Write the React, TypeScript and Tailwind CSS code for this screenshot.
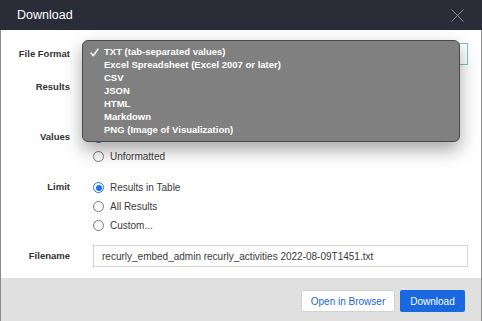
import React from "react";

const formats = [
  "TXT (tab-separated values)",
  "Excel Spreadsheet (Excel 2007 or later)",
  "CSV",
  "JSON",
  "HTML",
  "Markdown",
  "PNG (Image of Visualization)",
];

function Radio({ checked, label }: { checked?: boolean; label?: string }) {
  return (
    <div className="flex h-[19px] items-center">
      {checked ? (
        <span className="flex h-[11px] w-[11px] items-center justify-center rounded-full border border-[#1a73e8] bg-white">
          <span className="h-[6px] w-[6px] rounded-full bg-[#1a73e8]" />
        </span>
      ) : (
        <span className="h-[11px] w-[11px] rounded-full border border-[#7a7a7a] bg-white" />
      )}
      {label && <span className="ml-[6px] text-[10px] text-[#3a3a3a]">{label}</span>}
    </div>
  );
}

function Field({ label, children, className }: { label: string; children: React.ReactNode; className?: string }) {
  return (
    <div className={"flex " + (className ?? "")}>
      <div className="flex h-[19px] w-[69px] shrink-0 items-center justify-end text-[9.5px] font-bold text-[#333]">
        {label}
      </div>
      <div className="ml-[23px] flex-1">{children}</div>
    </div>
  );
}

export default function App() {
  return (
    <div className="h-[321px] w-[482px] overflow-hidden bg-[#3a3a3a] font-['Liberation_Sans',Arial,sans-serif]">
      <div className="flex h-[30px] items-center justify-between bg-[#2a2c38] pl-[17px] pr-[18px]">
        <span className="text-[12.5px] text-white">Download</span>
        <svg width="13" height="13" viewBox="0 0 13 13" className="text-[#8c8e96]">
          <path d="M0.5 0.5L12.5 12.5M12.5 0.5L0.5 12.5" stroke="currentColor" strokeWidth="1" />
        </svg>
      </div>

      <div className="relative border-x border-[#8c8c8c] bg-white pb-[11px] pr-[13px] pt-[13px]">
        <div className="flex">
          <div className="flex h-[22px] w-[69px] shrink-0 items-center justify-end text-[9.5px] font-bold text-[#333]">
            File Format
          </div>
          <div className="ml-[23px] h-[22px] flex-1 border border-[#78c4cf] bg-white" />
        </div>

        {/* options under the open menu are hidden, only their radios sit there */}
        <Field label="Results" className="mt-[13px]">
          <Radio checked />
          <Radio />
        </Field>

        <Field label="Values" className="mt-3">
          <Radio checked />
          <Radio label="Unformatted" />
        </Field>

        <Field label="Limit" className="mt-3">
          <Radio checked label="Results in Table" />
          <Radio label="All Results" />
          <Radio label="Custom..." />
        </Field>

        <div className="mt-[10px] flex">
          <div className="flex h-[22px] w-[69px] shrink-0 items-center justify-end text-[9.5px] font-bold text-[#333]">
            Filename
          </div>
          <div className="ml-[23px] flex h-[22px] flex-1 items-center border border-[#d4d4d4] bg-white px-[8px] text-[10px] text-[#3a3a3a]">
            recurly_embed_admin recurly_activities 2022-08-09T1451.txt
          </div>
        </div>

        <div className="absolute left-[81px] top-[10px] w-[378px] rounded-[6px] border border-[#4a4a4a] bg-[#808080] pb-[4px] pt-[5px] shadow-[0_8px_18px_rgba(0,0,0,0.35)]">
          {formats.map((f, i) => (
            <div key={f} className="flex h-[13px] items-center text-[9.5px] font-bold text-white">
              <span className="flex w-[21px] justify-end pr-[5px]">
                {i === 0 && (
                  <svg width="9" height="9" viewBox="0 0 9 9">
                    <path d="M1 5L3.3 7.8L8 1" stroke="white" strokeWidth="1.4" fill="none" strokeLinecap="round" strokeLinejoin="round" />
                  </svg>
                )}
              </span>
              <span>{f}</span>
            </div>
          ))}
        </div>
      </div>

      <div className="flex h-[43px] items-start justify-end gap-[5px] border-x border-[#8c8c8c] bg-[#e0e0e0] pr-[16px] pt-[12px]">
        <button className="flex h-[22px] w-[94px] items-center justify-center rounded-[2px] border border-[#d2d2d2] bg-white text-[10px] text-[#1a66d8]">
          Open in Browser
        </button>
        <button className="flex h-[22px] w-[65px] items-center justify-center rounded-[2px] bg-[#1a68e0] text-[10px] text-white">
          Download
        </button>
      </div>
    </div>
  );
}
